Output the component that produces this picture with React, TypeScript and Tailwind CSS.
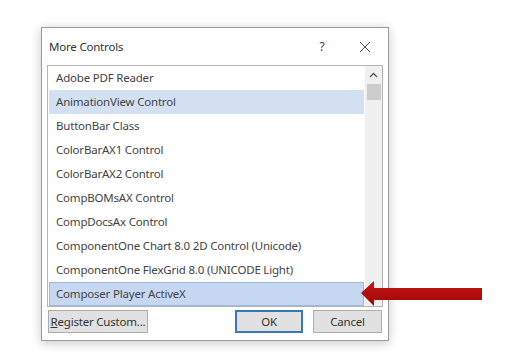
import { FC } from 'react'

const items = [
  'Adobe PDF Reader',
  'AnimationView Control',
  'ButtonBar Class',
  'ColorBarAX1 Control',
  'ColorBarAX2 Control',
  'CompBOMsAX Control',
  'CompDocsAx Control',
  'ComponentOne Chart 8.0 2D Control (Unicode)',
  'ComponentOne FlexGrid 8.0 (UNICODE Light)',
  'Composer Player ActiveX',
]

const Row: FC<{ label: string; index: number }> = ({ label, index }) => {
  let cls = 'border border-transparent'
  if (index === 1) cls = 'bg-[#d3e0f2] border border-[#d3e0f2]'
  if (index === 9) cls = 'bg-[#c6d8f1] border border-[#9fb9dc]'
  return (
    <div className={`h-[24px] flex items-center pl-[6px] text-[11.5px] tracking-[-0.2px] text-[#444] whitespace-nowrap ${cls}`}>
      {label}
    </div>
  )
}

const App: FC = () => {
  return (
    <div
      className="relative w-[512px] h-[360px] bg-white overflow-hidden"
      style={{ fontFamily: '"Noto Sans", "Open Sans", sans-serif' }}
    >
      <div className="ml-[41px] mt-[27px] w-[348px] h-[314px] bg-white border border-[#9a9a9a] shadow-[0_2px_10px_rgba(0,0,0,0.22)] flex flex-col">
        <div className="h-[37px] flex items-center pl-[7px] text-[11.5px] tracking-[-0.2px] text-[#333]">
          <span className="flex-1">More Controls</span>
          <span className="w-[20px] text-center mr-[27px] text-[#444] text-[12px]">?</span>
          <svg width="12" height="12" viewBox="0 0 12 12" className="mr-[17px]">
            <path d="M1 1 L11 11 M11 1 L1 11" stroke="#555" strokeWidth="1" />
          </svg>
        </div>
        <div className="mx-[5px] h-[242px] border border-[#b4b4b4] flex">
          <div className="flex-1 flex flex-col pl-px pr-px">
            {items.map((label, i) => (
              <Row key={label} label={label} index={i} />
            ))}
          </div>
          <div className="w-[17px] bg-[#f0f0f0] flex flex-col items-center">
            <svg width="9" height="6" viewBox="0 0 9 6" className="mt-[6px]">
              <path d="M1 5 L4.5 1.5 L8 5" stroke="#555" strokeWidth="1.3" fill="none" />
            </svg>
            <div className="mt-[6px] w-[14px] h-[16px] bg-[#cdcdcd]" />
          </div>
        </div>
        <div className="flex items-center mt-[3px] px-[6px] text-[11.5px] tracking-[-0.2px] text-[#333]">
          <button className="w-[100px] h-[23px] bg-[#e1e1e1] border border-[#adadad] whitespace-nowrap">
            <span className="underline">R</span>egister Custom...
          </button>
          <button className="ml-auto w-[68px] h-[23px] bg-[#e1e1e1] border-2 border-[#3a78b5]">OK</button>
          <button className="ml-[10px] w-[69px] h-[23px] bg-[#e1e1e1] border border-[#adadad]">Cancel</button>
        </div>
      </div>
      <svg className="absolute left-[360px] top-[280px]" width="124" height="28" viewBox="0 0 124 28">
        <defs>
          <linearGradient id="ar" x1="0" y1="0" x2="0" y2="1">
            <stop offset="0" stopColor="#c81414" />
            <stop offset="1" stopColor="#9c0808" />
          </linearGradient>
        </defs>
        <path d="M1 13 L14 1 L14 8 L122 8 L122 20 L14 20 L14 26 Z" fill="url(#ar)" />
      </svg>
    </div>
  )
}

export default App
